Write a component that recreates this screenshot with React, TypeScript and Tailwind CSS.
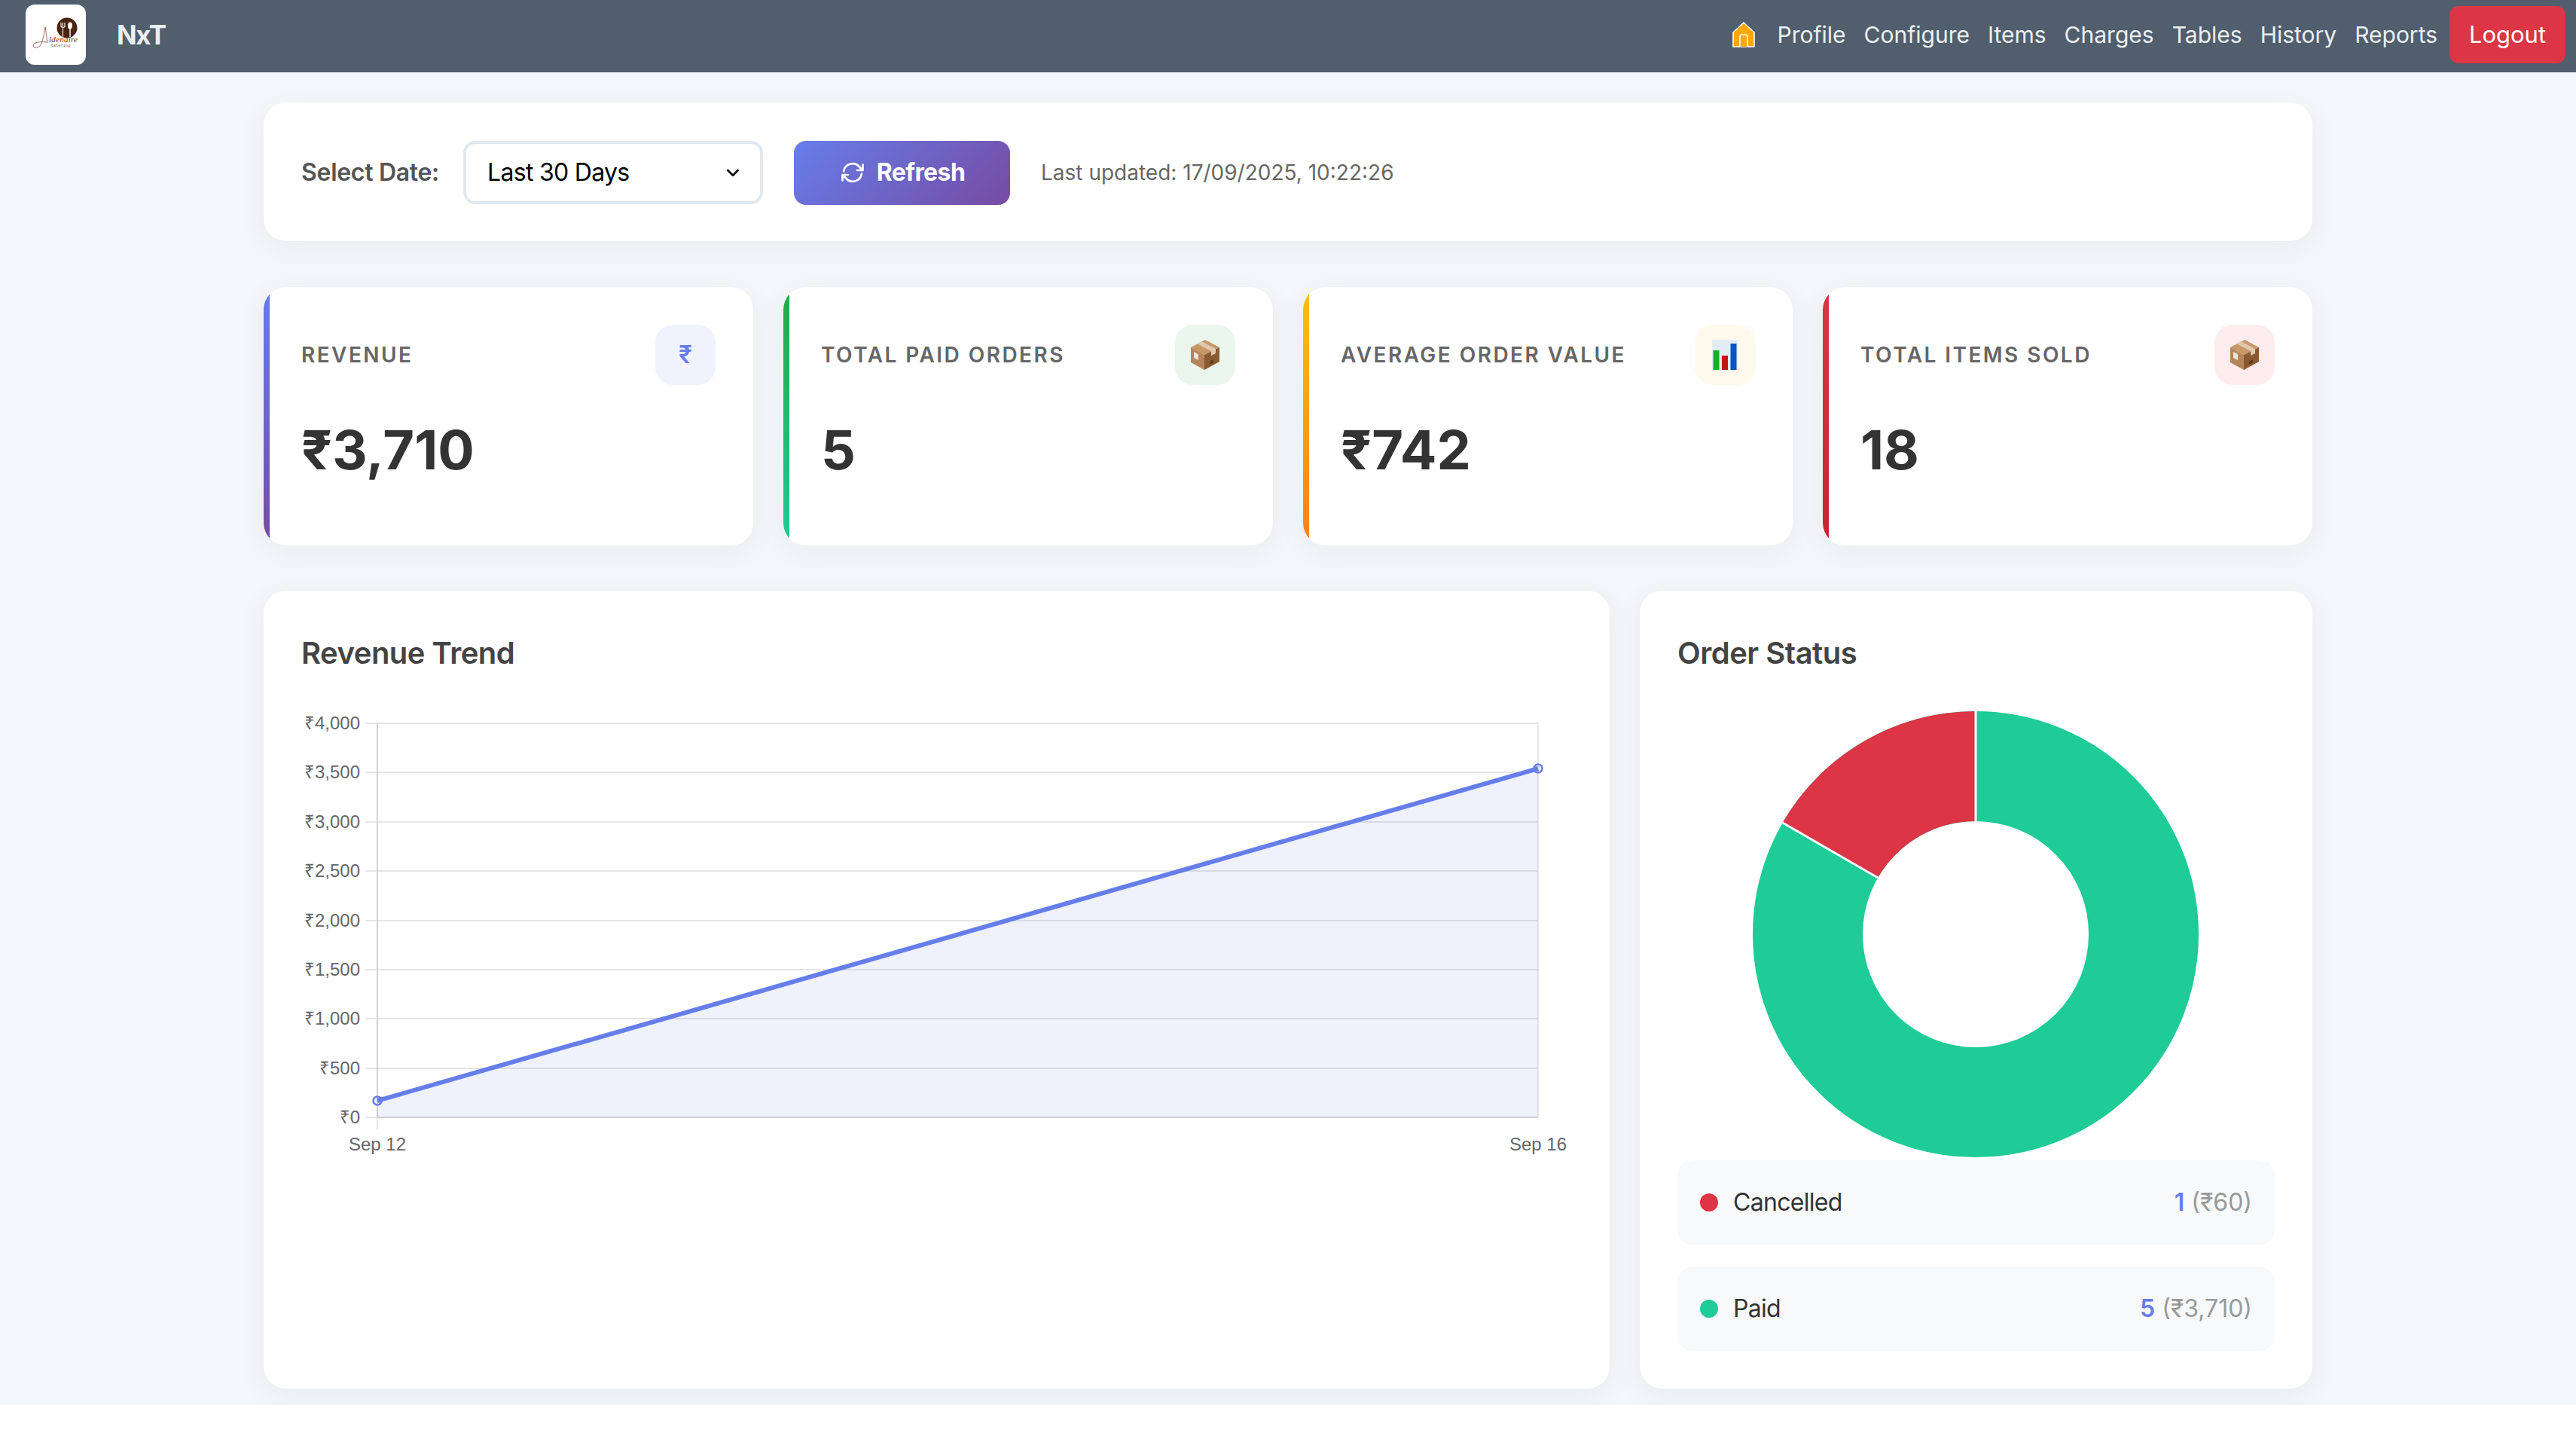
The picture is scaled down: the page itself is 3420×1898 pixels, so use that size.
const inter = "font-['Inter','Noto_Sans',sans-serif]";

const navItems = ['Profile', 'Configure', 'Items', 'Charges', 'Tables', 'History', 'Reports'];

const yTicks = ['₹4,000', '₹3,500', '₹3,000', '₹2,500', '₹2,000', '₹1,500', '₹1,000', '₹500', '₹0'];

function Logo() {
  return (
    <svg viewBox="0 0 80 80" className="w-full h-full">
      <circle cx="55" cy="31" r="13.500" fill="#4a2410" />
      <path d="M47 24v6M49.500 24v6M52 24v6M47 29q2.500 4 5 0M49.500 32v11" stroke="#fff" strokeWidth="1.100" fill="none" />
      <ellipse cx="59" cy="28" rx="3" ry="4.500" fill="#fff" />
      <path d="M59 31v12" stroke="#fff" strokeWidth="1.400" />
      <path
        d="M26 30c-2 10-3 20-7 25-3 3-9 3-9-1 0-4 9-5 18-4M26 30c1 6 2 14 3 21"
        stroke="#7a4a32"
        strokeWidth="0.800"
        fill="none"
      />
      <text x="31" y="50" textLength="38" fontFamily="Liberation Serif, serif" fontStyle="italic" fontSize="11" fill="#6b3a22">
        ldenaire
      </text>
      <text x="34" y="56" textLength="25" fontFamily="Liberation Mono, monospace" fontSize="4.500" fill="#6b3a22">
        Catering
      </text>
    </svg>
  );
}

function HouseIcon() {
  return (
    <svg viewBox="0 0 32 34" className="w-8 h-[34px]">
      <path d="M16 1 L30 14 V33 H2 V14 Z" fill="#ffa800" stroke="#fff" strokeWidth="1.600" strokeLinejoin="round" />
      <path d="M11 33 V20 q0-3 3-3 h4 q3 0 3 3 V33" fill="#ffa800" stroke="#fff" strokeWidth="1.600" />
    </svg>
  );
}

function RefreshIcon() {
  return (
    <svg viewBox="0 0 24 24" className="w-9 h-9" fill="none" stroke="#fff" strokeWidth="1.800" strokeLinecap="round" strokeLinejoin="round">
      <path d="M4 11a8 8 0 0 1 14-4l3 3M21 5v5h-5" />
      <path d="M20 13a8 8 0 0 1-14 4l-3-3M3 19v-5h5" />
    </svg>
  );
}

function BoxIcon() {
  return (
    <svg viewBox="0 0 38 40" className="w-[38px] h-10">
      <path d="M19 0 L38 10 L18 20 L0 10 Z" fill="#c79868" />
      <path d="M0 10 L18 20 V40 L0 30 Z" fill="#b5845a" />
      <path d="M38 10 L18 20 V40 L38 29 Z" fill="#8a5a32" />
      <path d="M8 5 L27 15 V21 L33 18 V12 L14 2 Z" fill="#e0c9ae" />
      <path d="M4 16 L10 19 V27 L4 24 Z" fill="#e8e4df" />
      <path d="M25 29 l5-3 v4 l-5 3 Z" fill="#5d3c1e" />
    </svg>
  );
}

function BarsIcon() {
  return (
    <svg viewBox="0 0 34 40" className="w-[34px] h-10">
      <rect width="34" height="40" fill="#e3ebf5" />
      <rect x="1.500" y="14" width="8" height="26" fill="#12b022" />
      <rect x="13" y="21" width="8" height="19" fill="#c01818" />
      <rect x="24.500" y="5" width="8" height="35" fill="#0a55bd" />
    </svg>
  );
}

function RevenueChart() {
  const ys = [960, 1025, 1091, 1156, 1222, 1287, 1352, 1418, 1483];
  return (
    <svg viewBox="400 930 1687 620" className="w-[1687px] h-[620px] block">
      {ys.map((y) => (
        <line key={y} x1="485" x2="2042" y1={y} y2={y} stroke="#e6e6e6" strokeWidth="2" />
      ))}
      <line x1="501" x2="501" y1="960" y2="1499" stroke="#e6e6e6" strokeWidth="2" />
      <line x1="501" x2="501" y1="960" y2="1483" stroke="#d2d2d2" strokeWidth="2" />
      <line x1="2042" x2="2042" y1="960" y2="1483" stroke="#e6e6e6" strokeWidth="2" />
      <line x1="501" x2="2042" y1="1483" y2="1483" stroke="#d2d2d2" strokeWidth="2" />
      <path d="M501 1461 L2042 1020 V1483 H501 Z" fill="#667eea" fillOpacity="0.1" />
      <line x1="501" y1="1461" x2="2042" y2="1020" stroke="#667eea" strokeWidth="6" />
      <circle cx="501" cy="1461" r="5.500" fill="#667eea" fillOpacity="0.1" stroke="#667eea" strokeWidth="2.500" />
      <circle cx="2042" cy="1020" r="5.500" fill="#667eea" fillOpacity="0.1" stroke="#667eea" strokeWidth="2.500" />
      {yTicks.map((t, i) => (
        <text key={t} x="478" y={ys[i] + 8} textAnchor="end" fontFamily="Liberation Sans, sans-serif" fontSize="24" fill="#666">
          {t}
        </text>
      ))}
      <text x="501" y="1527" textAnchor="middle" fontFamily="Liberation Sans, sans-serif" fontSize="24" fill="#666">
        Sep 12
      </text>
      <text x="2042" y="1527" textAnchor="middle" fontFamily="Liberation Sans, sans-serif" fontSize="24" fill="#666">
        Sep 16
      </text>
    </svg>
  );
}

function Donut() {
  // 1 of 6 orders cancelled, drawn as the last sixth before 12 o'clock
  return (
    <svg viewBox="1 0 596 596" className="w-[596px] h-[596px] block">
      <circle cx="298" cy="298" r="223" fill="none" stroke="#1fcb97" strokeWidth="146" />
      <path d="M298 2 A296 296 0 0 0 41.700 150 L168.100 223 A150 150 0 0 1 298 148 Z" fill="#dc3545" />
      <line x1="298" y1="0" x2="298" y2="148" stroke="#fff" strokeWidth="3" />
      <line x1="41.700" y1="150" x2="168.100" y2="223" stroke="#fff" strokeWidth="3" />
    </svg>
  );
}

function StatCard({
  label,
  value,
  stripe,
  iconBg,
  children,
}: {
  label: string;
  value: string;
  stripe: string;
  iconBg: string;
  children: React.ReactNode;
}) {
  return (
    <div className="relative h-[343px] rounded-[30px] bg-white overflow-hidden px-[50px] pt-[50px] shadow-[0_8px_40px_rgba(0,0,0,0.05)]">
      <div className={`absolute left-0 top-0 bottom-0 w-2 ${stripe}`} />
      <div className="flex items-center justify-between">
        <span className="text-[28px] font-semibold tracking-[2.45px] text-[#666]">{label}</span>
        <div className={`w-20 h-20 rounded-[24px] flex items-center justify-center ${iconBg}`}>{children}</div>
      </div>
      <div className="mt-[43px] text-[72px] leading-[85px] font-bold text-[#333]">{value}</div>
    </div>
  );
}

function LegendRow({ dot, name, count, amount }: { dot: string; name: string; count: string; amount: string }) {
  return (
    <div className="h-[112px] rounded-[20px] bg-[#f8f9fa] px-[30px] flex items-center justify-between">
      <div className="flex items-center gap-5">
        <span className={`w-6 h-6 rounded-full ${dot}`} />
        <span className="text-[32px] tracking-[-0.7px] text-[#333]">{name}</span>
      </div>
      <div className="text-[32px] text-[#999]">
        <span className="font-semibold text-[#667eea]">{count}</span> {amount}
      </div>
    </div>
  );
}

export default function App() {
  return (
    <div className={`${inter} bg-[#f5f6fa] pb-[22px]`}>
      <nav className="h-24 bg-[#515e6e] flex items-center pl-[34px] pr-[14px] pb-1">
        <div className="w-20 h-20 rounded-xl bg-white overflow-hidden">
          <Logo />
        </div>
        <span className="ml-[41px] text-[35px] tracking-[-1.5px] font-bold text-[#ecf0f1]">NxT</span>
        <div className="ml-auto flex items-center text-[30px] text-[#ecf0f1]">
          <div className="mr-[28px] flex">
            <HouseIcon />
          </div>
          <div className="flex gap-6">
            {navItems.map((item) => (
              <span key={item}>{item}</span>
            ))}
          </div>
          <button className="ml-4 h-[76px] w-[154px] rounded-xl bg-[#dc3545] text-[31px] text-white">Logout</button>
        </div>
      </nav>

      <main className="w-[2720px] mx-auto pt-10">
        <section className="h-[184px] rounded-[30px] bg-white px-[50px] pt-[2px] flex items-center shadow-[0_8px_40px_rgba(0,0,0,0.05)]">
          <span className="text-[32px] tracking-[-0.3px] font-semibold text-[#555]">Select Date:</span>
          <div className="ml-8 w-[398px] h-[84px] rounded-2xl border-4 border-[#e1e8ed] bg-white pl-[28px] pr-[24px] flex items-center justify-between">
            <span className="text-[32px] tracking-[-0.7px] text-black">Last 30 Days</span>
            <svg viewBox="0 0 16 16" className="w-6 h-6" fill="none" stroke="#111" strokeWidth="1.800" strokeLinecap="round" strokeLinejoin="round">
              <path d="M3.500 6l4.500 4.500L12.500 6" />
            </svg>
          </div>
          <button className="ml-[41px] w-[287px] h-[85px] rounded-2xl bg-[linear-gradient(135deg,#667eea,#764ba2)] text-[32px] tracking-[-0.6px] font-bold text-white flex items-center justify-center gap-[14px]">
            <RefreshIcon />
            Refresh
          </button>
          <span className="ml-[41px] text-[28px] text-[#666]">Last updated: 17/09/2025, 10:22:26</span>
        </section>

        <section className="mt-[61px] grid grid-cols-4 gap-10">
          <StatCard label="REVENUE" value="₹3,710" stripe="bg-[linear-gradient(180deg,#667eea,#764ba2)]" iconBg="bg-[#f0f2fd]">
            <span className="text-[32px] font-semibold text-[#667eea]">₹</span>
          </StatCard>
          <StatCard label="TOTAL PAID ORDERS" value="5" stripe="bg-[linear-gradient(180deg,#28a745,#20c997)]" iconBg="bg-[#eaf6ed]">
            <BoxIcon />
          </StatCard>
          <StatCard label="AVERAGE ORDER VALUE" value="₹742" stripe="bg-[linear-gradient(180deg,#ffc107,#fd7e14)]" iconBg="bg-[#fff9ec]">
            <BarsIcon />
          </StatCard>
          <StatCard label="TOTAL ITEMS SOLD" value="18" stripe="bg-[linear-gradient(180deg,#dc3545,#c82333)]" iconBg="bg-[#fcecee]">
            <BoxIcon />
          </StatCard>
        </section>

        <section className="mt-[60px] grid grid-cols-[1787px_893px] gap-10">
          <div className="h-[1059px] rounded-[30px] bg-white px-[50px] pt-[58px] shadow-[0_8px_40px_rgba(0,0,0,0.05)]">
            <h2 className="text-[40px] leading-[50px] tracking-[-0.5px] font-semibold text-[#444]">Revenue Trend</h2>
            <div className="mt-[38px]">
              <RevenueChart />
            </div>
          </div>
          <div className="h-[1059px] rounded-[30px] bg-white px-[50px] pt-[58px] shadow-[0_8px_40px_rgba(0,0,0,0.05)]">
            <h2 className="text-[40px] leading-[50px] tracking-[-0.5px] font-semibold text-[#444]">Order Status</h2>
            <div className="mt-[50px] flex justify-center">
              <Donut />
            </div>
            <div className="mt-[2px] flex flex-col gap-[29px]">
              <LegendRow dot="bg-[#dc3545]" name="Cancelled" count="1" amount="(₹60)" />
              <LegendRow dot="bg-[#1fcb97]" name="Paid" count="5" amount="(₹3,710)" />
            </div>
          </div>
        </section>
      </main>
    </div>
  );
}
